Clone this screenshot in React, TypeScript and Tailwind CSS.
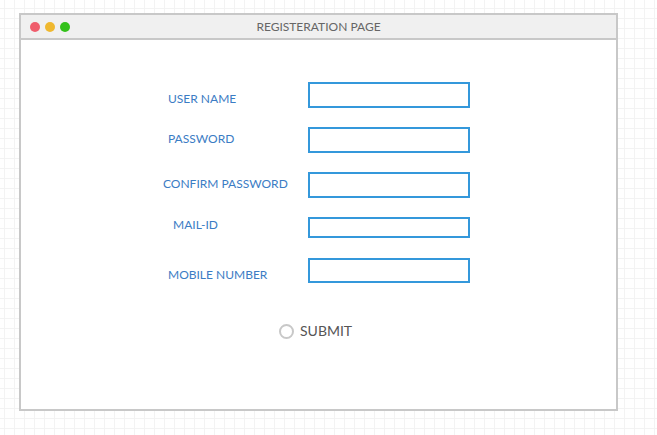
import React from "react";

const rows = [
  { label: "USER NAME", pl: 147, h: 26, mt: 42, dy: 4 },
  { label: "PASSWORD", pl: 147, h: 26, mt: 19, dy: -1 },
  { label: "CONFIRM PASSWORD", pl: 142, h: 26, mt: 19, dy: -1 },
  { label: "MAIL-ID", pl: 152, h: 21, mt: 19, dy: -3 },
  { label: "MOBILE NUMBER", pl: 147, h: 25, mt: 20, dy: 4 },
];

export default function App() {
  return (
    <div
      className="w-[657px] h-[435px] overflow-hidden bg-white bg-[linear-gradient(to_right,#f3f3f3_1px,transparent_1px),linear-gradient(to_bottom,#f3f3f3_1px,transparent_1px)] bg-[size:10px_10px] bg-[position:4px_8px] pt-[13px] pl-[19px]"
      style={{ fontFamily: "Lato, 'Open Sans', sans-serif" }}
    >
      <div className="w-[599px] h-[398px] border-2 border-[#c8c8c8] bg-white flex flex-col">
        <div className="relative h-[25px] shrink-0 bg-[#f0f0f0] border-b-2 border-[#c8c8c8] flex items-center pl-[9px] gap-[5px]">
          <span className="w-[10px] h-[10px] rounded-full bg-[#ef5d6c]" />
          <span className="w-[10px] h-[10px] rounded-full bg-[#efb82f]" />
          <span className="w-[10px] h-[10px] rounded-full bg-[#33c11a]" />
          <div className="absolute inset-0 flex items-center justify-center text-[12px] text-[#666666]">
            REGISTERATION PAGE
          </div>
        </div>
        <div className="flex flex-col">
          {rows.map((r) => (
            <div
              key={r.label}
              className="flex items-center"
              style={{ marginTop: r.mt, height: r.h }}
            >
              <div className="w-[287px] shrink-0" style={{ paddingLeft: r.pl }}>
                <span
                  className="block text-[12px] leading-[14px] text-[#3b7cc4] whitespace-nowrap"
                  style={{ transform: `translateY(${r.dy}px)` }}
                >
                  {r.label}
                </span>
              </div>
              <div
                className="w-[162px] border-2 border-[#3498db] bg-white"
                style={{ height: r.h }}
              />
            </div>
          ))}
          <div className="mt-[40px] h-[16px] flex items-center pl-[258px] gap-[6px]">
            <span className="w-[15px] h-[15px] rounded-full border-2 border-[#c8c8c8] bg-white" />
            <span className="text-[14px] leading-[16px] text-[#555555]">SUBMIT</span>
          </div>
        </div>
      </div>
    </div>
  );
}
